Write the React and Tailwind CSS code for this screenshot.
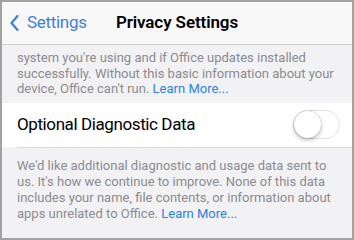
import React from 'react';

function Toggle() {
  return (
    <div className="h-[29px] w-[47px] rounded-full border border-[#e1e1e4] bg-white">
      <div className="h-[27px] w-[27px] rounded-full bg-white shadow-[0_2px_4px_rgba(0,0,0,0.28),0_0_1px_rgba(0,0,0,0.3)]" />
    </div>
  );
}

export default function App() {
  const font = { fontFamily: 'Roboto, "Liberation Sans", sans-serif' };
  return (
    <div className="h-[240px] w-[354px] overflow-hidden border-2 border-[#a2a2a2] bg-[#f2f2f4]" style={font}>
      <header className="grid h-[43px] grid-cols-[1fr_auto_1fr] items-center border-b border-[#d2d2d4] bg-[#f8f8f8]">
        <div className="flex items-center gap-[8px] pl-[8px] text-[#3e7fdc]">
          <svg width="9" height="16" viewBox="0 0 9 16" fill="none">
            <path d="M7.5 1L1.5 8L7.5 15" stroke="currentColor" strokeWidth="2.2" strokeLinecap="round" strokeLinejoin="round" />
          </svg>
          <span className="text-[17px] tracking-[-0.3px]">Settings</span>
        </div>
        <h1 className="text-[17px] font-semibold tracking-[-0.1px] text-black">Privacy Settings</h1>
        <div />
      </header>

      <p className="px-[15px] pb-[6px] pt-[5px] text-[13px] leading-[15.5px] text-[#8b8b90]">
        system you're using and if Office updates installed successfully. Without this basic information about your device, Office can't run.{' '}
        <span className="text-[#2f7fe0]">Learn More...</span>
      </p>

      <div className="bg-white">
        <div className="flex h-[44px] items-center justify-between pl-[15px] pr-[12px]">
          <span className="text-[17px] tracking-[-0.4px] text-black">Optional Diagnostic Data</span>
          <Toggle />
        </div>
      </div>
      <div className="ml-[15px] h-px bg-[#dcdcde]" />

      <p className="px-[15px] pt-[10px] text-[13px] leading-[16px] text-[#8b8b90]">
        We'd like additional diagnostic and usage data sent to us. It's how we continue to improve. None of this data includes your name, file contents, or information about apps unrelated to Office.{' '}
        <span className="text-[#2f7fe0]">Learn More...</span>
      </p>
    </div>
  );
}
